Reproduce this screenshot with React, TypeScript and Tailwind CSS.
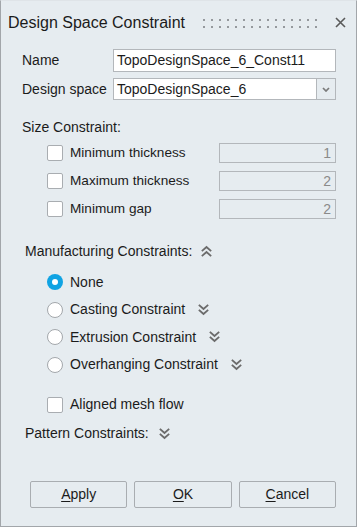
import React from "react";

const font = { fontFamily: '"Liberation Sans", Arial, sans-serif' };

function DoubleChevron({ up = false }: { up?: boolean }) {
  return (
    <svg width="11" height="12" viewBox="0 0 11 12" className="shrink-0">
      <g
        fill="none"
        stroke="#6b6b6b"
        strokeWidth="1.8"
        strokeLinecap="square"
        transform={up ? "rotate(180 5.5 6)" : undefined}
      >
        <path d="M1.5 1.5 L5.5 5 L9.5 1.5" />
        <path d="M1.5 6.5 L5.5 10 L9.5 6.5" />
      </g>
    </svg>
  );
}

function Checkbox() {
  return <div className="w-[16px] h-[16px] shrink-0 bg-white border border-[#a9adb1] rounded-[2px]" />;
}

function Radio({ checked = false }: { checked?: boolean }) {
  if (checked) {
    return (
      <div className="w-[16px] h-[16px] shrink-0 rounded-full bg-[#10a3e3] flex items-center justify-center">
        <div className="w-[6px] h-[6px] rounded-full bg-white" />
      </div>
    );
  }
  return <div className="w-[16px] h-[16px] shrink-0 rounded-full bg-white border border-[#a3a7ab]" />;
}

function SizeRow({ label, value }: { label: string; value: string }) {
  return (
    <div className="flex items-center h-[20px] pl-[25px]">
      <Checkbox />
      <span className="ml-[7px] text-[13.6px] text-[#1b1b1b]">{label}</span>
      <div className="ml-auto w-[117px] h-[20px] border border-[#b3b7bb] flex items-center justify-end pr-[4px] text-[14px] text-[#8a8a8a]">
        {value}
      </div>
    </div>
  );
}

function RadioRow({ label, checked, chev }: { label: string; checked?: boolean; chev?: boolean }) {
  return (
    <div className="flex items-center h-[20px] pl-[25px]">
      <Radio checked={checked} />
      <span className="ml-[7px] text-[14px] text-[#1b1b1b]">{label}</span>
      {chev && (
        <span className="ml-[13px] flex items-center">
          <DoubleChevron />
        </span>
      )}
    </div>
  );
}

function Button({ first, rest }: { first: string; rest: string }) {
  return (
    <div className="flex-1 h-[27px] border border-[#a9adb1] rounded-[2px] flex items-center justify-center text-[14px] text-[#1b1b1b]">
      <span>
        <span className="underline underline-offset-[2px]">{first}</span>
        {rest}
      </span>
    </div>
  );
}

export default function App() {
  const dots = Array.from({ length: 15 });
  return (
    <div
      style={font}
      className="w-[357px] h-[527px] bg-[#e6ecf0] border border-[#a2a6aa] border-t-[#dfe4e8] flex flex-col"
    >
      {/* Title bar */}
      <div className="h-[43px] flex items-center pl-[7px] pr-[10px]">
        <span className="text-[16px] text-[#1b1b1b]">Design Space Constraint</span>
        <div className="ml-auto mr-[18px] flex flex-col gap-[5px] mt-[2px]">
          {[0, 1].map((r) => (
            <div key={r} className="flex gap-[6px]">
              {dots.map((_, i) => (
                <div key={i} className="w-[2px] h-[2px] bg-[#95999d]" />
              ))}
            </div>
          ))}
        </div>
        <svg width="11" height="11" viewBox="0 0 11 11">
          <path d="M1 1 L10 10 M10 1 L1 10" stroke="#5a5a5a" strokeWidth="1.6" />
        </svg>
      </div>

      {/* Form */}
      <div className="pl-[21px] pr-[20px] mt-[5px] flex flex-col">
        <div className="flex items-center h-[23px]">
          <span className="w-[91px] text-[14px] text-[#1b1b1b]">Name</span>
          <div className="flex-1 h-[23px] bg-white border border-[#b3b7bb] flex items-center pl-[3px] text-[14px] text-[#1b1b1b]">
            TopoDesignSpace_6_Const11
          </div>
        </div>
        <div className="flex items-center h-[22px] mt-[6px]">
          <span className="w-[91px] text-[14px] text-[#1b1b1b]">Design space</span>
          <div className="flex-1 h-[22px] bg-white border border-[#b3b7bb] flex items-center pl-[3px] text-[14px] text-[#1b1b1b]">
            TopoDesignSpace_6
          </div>
          <div className="w-[19px] h-[22px] border border-l-0 border-[#b3b7bb] flex items-center justify-center">
            <svg width="8" height="5" viewBox="0 0 8 5">
              <path d="M1 1 L4 4 L7 1" fill="none" stroke="#7a7a7a" strokeWidth="1.7" />
            </svg>
          </div>
        </div>

        <div className="mt-[19px] h-[16px] flex items-center text-[14px] text-[#1b1b1b]">Size Constraint:</div>

        <div className="mt-[8px] flex flex-col gap-[8px]">
          <SizeRow label="Minimum thickness" value="1" />
          <SizeRow label="Maximum thickness" value="2" />
          <SizeRow label="Minimum gap" value="2" />
        </div>

        <div className="mt-[24px] h-[16px] pl-[3px] flex items-center text-[14px] text-[#1b1b1b]">
          <span>Manufacturing Constraints:</span>
          <span className="ml-[9px] flex items-center">
            <DoubleChevron up />
          </span>
        </div>

        <div className="mt-[13px] flex flex-col gap-[7.5px]">
          <RadioRow label="None" checked />
          <RadioRow label="Casting Constraint" chev />
          <RadioRow label="Extrusion Constraint" chev />
          <RadioRow label="Overhanging Constraint" chev />
        </div>

        <div className="mt-[20px] flex items-center h-[20px] pl-[25px]">
          <Checkbox />
          <span className="ml-[7px] text-[14px] text-[#1b1b1b]">Aligned mesh flow</span>
        </div>

        <div className="mt-[11px] h-[16px] pl-[3px] flex items-center text-[14px] text-[#1b1b1b]">
          <span>Pattern Constraints:</span>
          <span className="ml-[10px] flex items-center">
            <DoubleChevron />
          </span>
        </div>

        <div className="mt-[39px] pl-[8px] flex gap-[7px]">
          <Button first="A" rest="pply" />
          <Button first="O" rest="K" />
          <Button first="C" rest="ancel" />
        </div>
      </div>
    </div>
  );
}
